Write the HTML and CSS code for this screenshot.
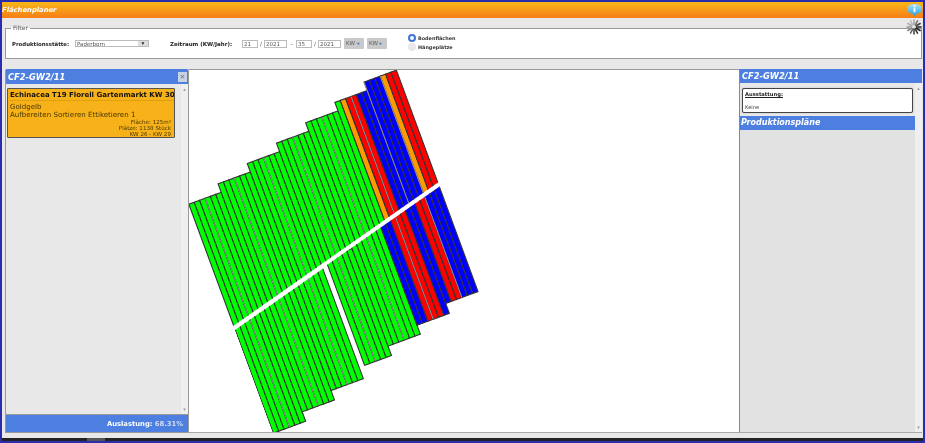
FILE: index.html
```html
<!DOCTYPE html>
<html lang="de">
<head>
<meta charset="utf-8">
<title>Flächenplaner</title>
<link rel="stylesheet" href="styles.css">
</head>
<body>
<div class="app">
  <header class="topbar">
    <span class="apptitle">Flächenplaner</span>
    <svg class="info" viewBox="0 0 15 13"><defs><linearGradient id="ib" x1="0" y1="0" x2="0" y2="1"><stop offset="0" stop-color="#a8e2f8"/><stop offset="1" stop-color="#1a9ae0"/></linearGradient></defs><path d="M7.5 0C11.6 0 15 2.2 15 5s-3 4.7-5.6 5L6.500 13l.2-3C3 9.800 0 7.800 0 5s3.400-5 7.500-5z" fill="url(#ib)"/><rect x="6.600" y="1.200" width="1.800" height="1.600" fill="#fff"/><rect x="6.600" y="3.600" width="1.800" height="4.600" fill="#fff"/></svg>
  </header>
  <svg class="spinner" viewBox="-8 -8 16 16">
    <g stroke-width="1.6" stroke-linecap="round">
      <line x1="2.500" x2="7" y1="0" y2="0" stroke="#222"/>
      <line x1="2.200" y1="1.300" x2="6.100" y2="3.500" stroke="#222"/>
      <line x1="1.300" y1="2.200" x2="3.500" y2="6.100" stroke="#333"/>
      <line x1="0" y1="2.500" x2="0" y2="7" stroke="#444"/>
      <line x1="-1.300" y1="2.200" x2="-3.500" y2="6.100" stroke="#666"/>
      <line x1="-2.200" y1="1.300" x2="-6.100" y2="3.500" stroke="#888"/>
      <line x1="-2.500" x2="-7" y1="0" y2="0" stroke="#999"/>
      <line x1="-2.200" y1="-1.300" x2="-6.100" y2="-3.500" stroke="#aaa"/>
      <line x1="-1.300" y1="-2.200" x2="-3.500" y2="-6.100" stroke="#bbb"/>
      <line x1="0" y1="-2.500" x2="0" y2="-7" stroke="#aaa"/>
      <line x1="1.300" y1="-2.200" x2="3.500" y2="-6.100" stroke="#777"/>
      <line x1="2.200" y1="-1.300" x2="6.100" y2="-3.500" stroke="#444"/>
    </g>
  </svg>
  <div class="filter">
    <span class="legend">Filter</span>
    <span class="lbl site-lbl">Produktionsstätte:</span>
    <span class="select"><span class="select-val">Paderborn</span><span class="select-btn">▾</span></span>
    <span class="lbl range-lbl">Zeitraum (KW/Jahr):</span>
    <span class="field w-kw">21</span><span class="sep">/</span><span class="field w-yr">2021</span><span class="sep dash">-</span><span class="field w-kw">35</span><span class="sep">/</span><span class="field w-yr">2021</span>
    <span class="kwbtn">KW <i class="arr">◂</i></span><span class="kwbtn">KW <i class="arr">▸</i></span>
    <div class="radios">
      <div class="radio"><span class="dot on"></span>Bodenflächen</div>
      <div class="radio"><span class="dot"></span>Hängeplätze</div>
    </div>
  </div>
  <main class="panels">
    <section class="left">
      <div class="phead"><span>CF2-GW2/11</span><span class="close">✕</span></div>
      <div class="lbody">
        <div class="lcontent">
          <article class="card">
            <div class="card-title">Echinacea T19 Florell Gartenmarkt KW 30</div>
            <div class="card-line">Goldgelb</div>
            <div class="card-line">Aufbereiten Sortieren Ettiketieren 1</div>
            <div class="card-meta">Fläche: 125m²</div>
            <div class="card-meta">Plätze: 1138 Stück</div>
            <div class="card-meta">KW 26 - KW 29</div>
          </article>
        </div>
        <div class="scroll"><span>▴</span><span>▾</span></div>
      </div>
      <div class="lfoot"><b>Auslastung:</b> <span>68.31%</span></div>
    </section>
    <section class="map">
      <svg class="plan" viewBox="189 69 550 364" width="550" height="364">
        <defs>
          <clipPath id="cu"><polygon points="100,150 360,150 360,319.500 100,388"/></clipPath>
          <clipPath id="cl"><polygon points="106,391 212,363.400 212,520 106,520"/></clipPath>
          <clipPath id="cr"><polygon points="212,362.600 350,326.600 350,520 212,520"/></clipPath>
        </defs>
        <g transform="rotate(-20.25)" clip-path="url(#cu)">
          <rect class="g" x="106.5" y="257" width="5.74" height="135"/><rect class="g" x="112.24" y="257" width="5.74" height="135"/><rect class="g" x="117.98" y="257" width="5.74" height="135"/><rect class="g" x="123.72" y="257" width="5.74" height="135"/><rect class="g" x="129.46" y="257" width="5.74" height="135"/><rect class="g" x="135.2" y="257" width="5.74" height="135"/>
          <rect class="g" x="140.94" y="248" width="5.74" height="144"/><rect class="g" x="146.68" y="248" width="5.74" height="144"/><rect class="g" x="152.42" y="248" width="5.74" height="144"/><rect class="g" x="158.16" y="248" width="5.74" height="144"/><rect class="g" x="163.9" y="248" width="5.74" height="144"/><rect class="g" x="169.64" y="248" width="5.74" height="144"/>
          <rect class="g" x="175.38" y="239" width="5.74" height="153"/><rect class="g" x="181.12" y="239" width="5.74" height="153"/><rect class="g" x="186.86" y="239" width="5.74" height="153"/><rect class="g" x="192.6" y="239" width="5.74" height="153"/><rect class="g" x="198.34" y="239" width="5.74" height="153"/><rect class="g" x="204.08" y="239" width="5.74" height="153"/>
          <rect class="g" x="209.82" y="230" width="5.74" height="162"/><rect class="g" x="215.56" y="230" width="5.74" height="162"/><rect class="g" x="221.3" y="230" width="5.74" height="162"/><rect class="g" x="227.04" y="230" width="5.74" height="162"/><rect class="g" x="232.78" y="230" width="5.74" height="162"/><rect class="g" x="238.52" y="230" width="5.74" height="162"/>
          <rect class="g" x="244.26" y="221" width="5.74" height="171"/><rect class="g" x="250" y="221" width="5.74" height="171"/><rect class="g" x="255.74" y="221" width="5.74" height="171"/><rect class="g" x="261.48" y="221" width="5.74" height="171"/><rect class="g" x="267.22" y="221" width="5.74" height="171"/><rect class="g" x="272.96" y="221" width="5.74" height="171"/>
          <rect class="g" x="278.7" y="212" width="5.74" height="180"/><rect class="o" x="284.44" y="212" width="5.74" height="180"/><rect class="r" x="290.18" y="212" width="5.74" height="180"/><rect class="r" x="295.92" y="212" width="5.74" height="180"/><rect class="b" x="301.66" y="212" width="5.74" height="180"/><rect class="b" x="307.4" y="212" width="5.74" height="180"/>
          <rect class="b" x="313.14" y="203" width="5.74" height="189"/><rect class="b" x="318.88" y="203" width="5.74" height="189"/><rect class="b" x="324.62" y="203" width="5.74" height="189"/><rect class="o" x="330.36" y="203" width="5.74" height="189"/><rect class="r" x="336.1" y="203" width="5.74" height="189"/><rect class="r" x="341.84" y="203" width="5.74" height="189"/>
          <path class="seam" d="M123.72 257V392M158.16 248V392M192.6 239V392M227.04 230V392M261.48 221V392M295.92 212V392M330.36 203V392M313.14 203V392"/>
        </g>
        <g transform="rotate(-20.25)" clip-path="url(#cl)">
          <rect class="g" x="106.5" y="380" width="5.74" height="121"/><rect class="g" x="112.24" y="380" width="5.74" height="121"/><rect class="g" x="117.98" y="380" width="5.74" height="121"/><rect class="g" x="123.72" y="380" width="5.74" height="121"/><rect class="g" x="129.46" y="380" width="5.74" height="121"/><rect class="g" x="135.2" y="380" width="5.74" height="121"/>
          <rect class="g" x="140.94" y="370" width="5.74" height="121"/><rect class="g" x="146.68" y="370" width="5.74" height="121"/><rect class="g" x="152.42" y="370" width="5.74" height="121"/><rect class="g" x="158.16" y="370" width="5.74" height="121"/><rect class="g" x="163.9" y="370" width="5.74" height="121"/><rect class="g" x="169.64" y="370" width="5.74" height="121"/>
          <rect class="g" x="175.38" y="360" width="5.74" height="121"/><rect class="g" x="181.12" y="360" width="5.74" height="121"/><rect class="g" x="186.86" y="360" width="5.74" height="121"/><rect class="g" x="192.6" y="360" width="5.74" height="121"/><rect class="g" x="198.34" y="360" width="5.74" height="121"/><rect class="g" x="204.08" y="360" width="5.74" height="121"/>
          <path class="seam" d="M123.72 380V501M158.16 370V491M192.6 360V481"/>
        </g>
        <g transform="rotate(-20.25)" clip-path="url(#cr)">
          <rect class="g" x="215.56" y="355" width="5.74" height="114"/><rect class="g" x="221.3" y="355" width="5.74" height="114"/><rect class="g" x="227.04" y="355" width="5.74" height="114"/><rect class="g" x="232.78" y="355" width="5.74" height="114"/><rect class="g" x="238.52" y="355" width="5.74" height="114"/>
          <rect class="g" x="244.26" y="340" width="5.74" height="119"/><rect class="g" x="250" y="340" width="5.74" height="119"/><rect class="g" x="255.74" y="340" width="5.74" height="119"/><rect class="g" x="261.48" y="340" width="5.74" height="119"/><rect class="g" x="267.22" y="340" width="5.74" height="119"/><rect class="g" x="272.96" y="340" width="5.74" height="119"/>
          <rect class="b" x="278.7" y="330" width="5.74" height="119.5"/><rect class="b" x="284.44" y="330" width="5.74" height="119.5"/><rect class="r" x="290.18" y="330" width="5.74" height="119.5"/><rect class="r" x="295.92" y="330" width="5.74" height="119.5"/><rect class="r" x="301.66" y="330" width="5.74" height="119.5"/><rect class="b" x="307.4" y="330" width="5.74" height="119.5"/>
          <rect class="b" x="313.14" y="320" width="5.74" height="119"/><rect class="r" x="318.88" y="320" width="5.74" height="119"/><rect class="r" x="324.62" y="320" width="5.74" height="119"/><rect class="b" x="330.36" y="320" width="5.74" height="119"/><rect class="b" x="336.1" y="320" width="5.74" height="119"/><rect class="b" x="341.84" y="320" width="5.74" height="119"/>
          <path class="seam" d="M227.04 340V469M261.48 330V459M295.92 320V449.5M330.36 320V439"/>
        </g>
      </svg>
    </section>
    <section class="right">
      <div class="phead"><span>CF2-GW2/11</span></div>
      <div class="rbody">
        <div class="rcontent">
          <div class="equip">
            <div class="equip-title">Ausstattung:</div>
            <div class="equip-val">Keine</div>
          </div>
          <h2 class="plans">Produktionspläne</h2>
          <div class="plans-body"></div>
        </div>
        <div class="scroll rscroll"><span>▴</span><span>▾</span></div>
      </div>
    </section>
  </main>
  <div class="bottom"><span class="thumb"></span></div>
</div>
</body>
</html>
```
FILE: styles.css
```css
* { box-sizing: border-box; }
html, body { margin: 0; height: 443px; overflow: hidden; }
body { background: #2b2bad; font-family: "DejaVu Sans", sans-serif; color: #222; }
.app { position: relative; margin: 2px 2px 2px 2px; height: 439px; background: #e8e8e8; display: flex; flex-direction: column; filter: blur(0.4px); }
.topbar { height: 16px; flex: none; background: linear-gradient(#f8b718, #f67d16); display: flex; align-items: center; justify-content: space-between; }
.apptitle { color: #fff; font-size: 6.8px; font-weight: bold; font-style: italic; }
.info { width: 15px; height: 13px; position: absolute; right: 1px; top: 2px; }
.spinner { position: absolute; right: 1px; top: 17px; width: 16px; height: 16px; z-index: 2; }
.filter { flex: none; margin: 10px 0 0 3px; width: 917px; height: 31px; background: #fff; border: 1px solid #999; position: relative; display: flex; align-items: center; font-size: 6px; }
.legend { position: absolute; left: 5px; top: -5px; padding: 0 2px; font-size: 6px; color: #555; background: linear-gradient(#e8e8e8 50%, #fff 50%); line-height: 8px; }
.lbl { font-weight: bold; white-space: nowrap; }
.site-lbl { margin-left: 6px; width: 63px; font-size: 5.4px; }
.select { display: flex; width: 74px; height: 7px; margin-right: 21px; border: 1px solid #bbb; font-size: 5.5px; line-height: 6px; color: #555; }
.select-val { flex: 1; padding-left: 1px; }
.select-btn { width: 10px; background: #ddd; text-align: center; color: #222; line-height: 5px; }
.range-lbl { width: 72px; font-size: 5.5px; }
.field { height: 8px; border: 1px solid #bbb; font-size: 5.5px; line-height: 6px; padding-left: 1px; color: #555; }
.w-kw { width: 16px; }
.w-yr { width: 23px; }
.sep { width: 6px; text-align: center; color: #555; font-size: 6px; }
.dash { width: 9px; }
.kwbtn { width: 20px; height: 11px; margin-left: 3px; background: #c9c9c9; border-radius: 1px; color: #555; font-size: 5.5px; line-height: 11px; padding-left: 2px; white-space: nowrap; }
.arr { font-style: normal; color: #4a7fdd; }
.radios { margin: -2px 0 0 21px; display: flex; flex-direction: column; }
.radio { display: flex; align-items: center; font-weight: bold; font-size: 4.9px; height: 9px; color: #333; }
.dot { width: 8px; height: 8px; border-radius: 50%; background: #e8e8e8; margin-right: 2px; }
.dot.on { background: #fff; border: 2.5px solid #3f74d6; }
.panels { flex: none; display: flex; margin: 10px 0 0 3px; height: 364px; }
.phead { flex: none; height: 14px; background: #4c7fdf; color: #fff; font-size: 8.3px; font-weight: bold; font-style: italic; padding-left: 2px; display: flex; align-items: center; justify-content: space-between; line-height: 14px; }
.left { width: 184px; display: flex; flex-direction: column; border: 1px solid #999; border-top-color: #4c7fdf; border-radius: 2px 2px 0 0; }
.close { width: 9px; height: 10px; margin-right: 1px; background: #c8d3e6; color: #777; font-size: 7px; font-style: normal; text-align: center; line-height: 10px; }
.lbody { flex: 1; display: flex; min-height: 0; background: #e8e8e8; }
.lcontent { flex: 1; padding: 4px 0 0 1px; }
.scroll { width: 7px; background: #efefef; display: flex; flex-direction: column; justify-content: space-between; color: #999; font-size: 5px; line-height: 8px; text-align: center; padding: 1px 0; }
.card { width: 168px; height: 50px; background: #f7b21a; border: 1px solid #555; border-radius: 1px; padding: 1px 0 0 2px; line-height: 8px; color: #4a3700; overflow: hidden; }
.card-title { font-size: 7px; font-weight: bold; color: #111; white-space: nowrap; border-bottom: 1px solid #e09f10; height: 11px; line-height: 11px; margin-bottom: 1.5px; }
.card-line { font-size: 7.05px; line-height: 8.2px; white-space: nowrap; }
.card-meta { font-size: 5.6px; line-height: 6.2px; text-align: right; padding-right: 3px; }
.lfoot { flex: none; height: 18px; background: #4c7fdf; color: #fff; font-size: 6.8px; line-height: 18px; text-align: right; padding-right: 5px; border-top: 1px solid #999; }
.lfoot span { color: #cfdcf5; font-weight: bold; }
.map { width: 550px; height: 364px; background: #fff; border-top: 1px solid #999; border-bottom: 1px solid #aaa; overflow: hidden; }
.plan { display: block; margin-top: -1px; }
.g { fill: #00ff00; }
.o { fill: #ff9900; }
.r { fill: #ff0000; }
.b { fill: #0000ff; }
.plan rect { stroke: #333; stroke-width: 1.1; }
.seam { stroke: #a0a0a0; stroke-width: 0.8; fill: none; }
.right { width: 183px; display: flex; flex-direction: column; border-left: 1px solid #888; border-bottom: 1px solid #aaa; }
.rbody { flex: 1; display: flex; min-height: 0; background: #e8e8e8; }
.rcontent { flex: 1; display: flex; flex-direction: column; padding-top: 5px; }
.equip { width: 171px; height: 25px; margin: 0 0 3px 2px; background: #fff; border: 1px solid #444; border-radius: 2px; padding: 2px; font-size: 5.2px; box-shadow: 0 0 1px #777; }
.equip-title { font-weight: bold; text-decoration: underline; color: #222; line-height: 7px; }
.equip-val { margin-top: 6px; color: #444; line-height: 7px; }
.plans { margin: 0; flex: none; height: 14px; background: #4c7fdf; color: #fff; font-size: 8px; font-style: italic; font-weight: bold; line-height: 14px; padding-left: 1px; }
.plans-body { flex: 1; background: #e2e2e2; }
.bottom { position: absolute; left: 0; right: 0; top: 436px; height: 3px; background: #222; }
.thumb { display: block; width: 18px; height: 3px; margin-left: 85px; background: #555; }
```
